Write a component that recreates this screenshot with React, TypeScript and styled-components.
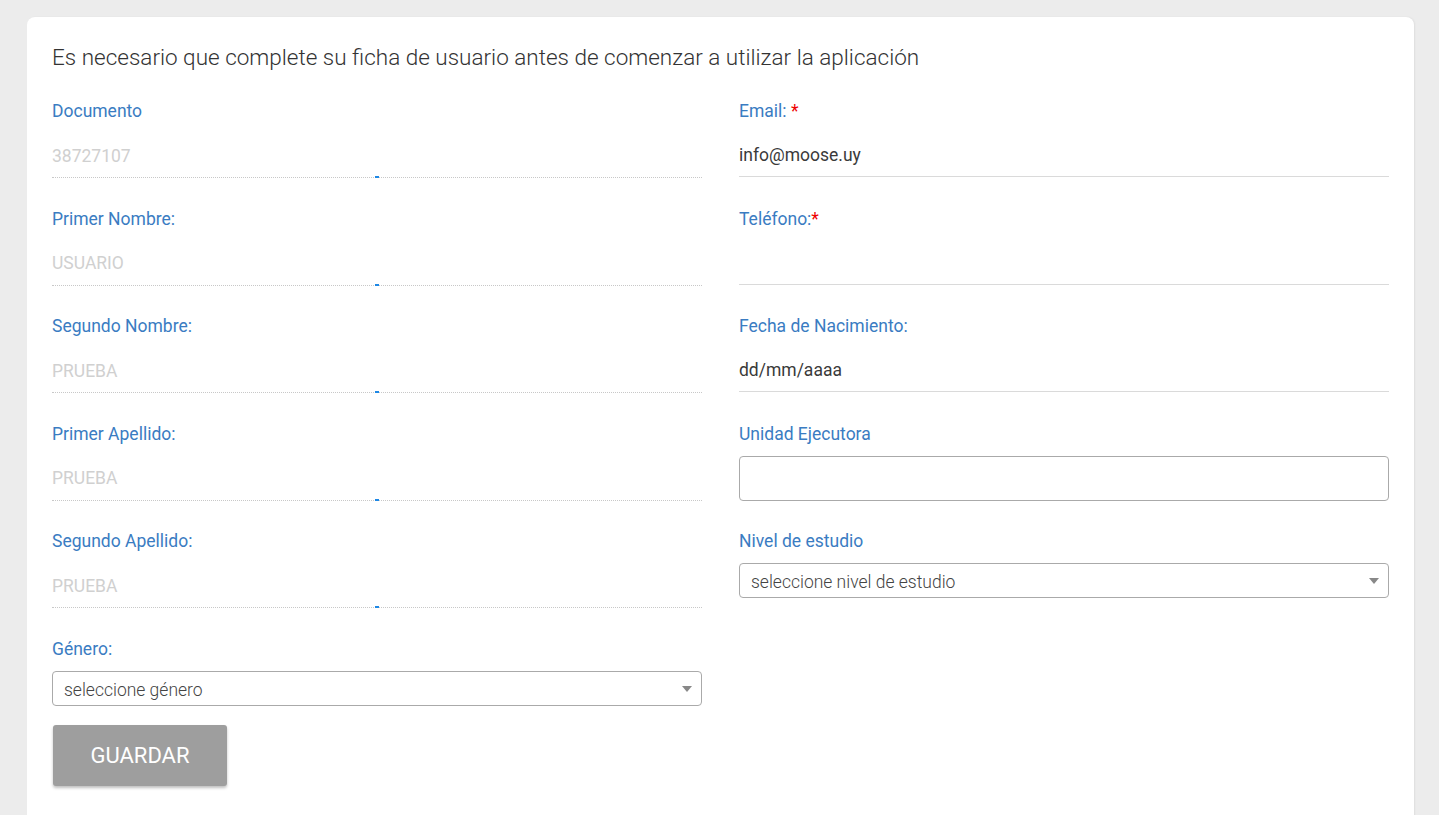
import React from 'react';
import styled, { createGlobalStyle } from 'styled-components';

const GlobalStyle = createGlobalStyle`
  html, body {
    margin: 0;
    padding: 0;
    background: #ececec;
    font-family: Roboto, "Noto Sans", sans-serif;
    overflow: hidden;
  }
  * { box-sizing: border-box; }
`;

const Page = styled.div`
  padding: 17px 25px 0 27px;
  height: 815px;
`;

const Card = styled.div`
  background: #fff;
  border-radius: 8px;
  box-shadow: 1px 0 2px rgba(0, 0, 0, 0.06);
  padding: 28px 25px 40px 25px;
  min-height: 830px;
`;

const Title = styled.h1`
  margin: 0 0 31px 0;
  font-size: 22.5px;
  font-weight: 300;
  color: #333;
  line-height: 24px;
`;

const Columns = styled.div`
  display: grid;
  grid-template-columns: 650px 650px;
  column-gap: 37px;
`;

const Column = styled.div`
  display: flex;
  flex-direction: column;
`;

const Field = styled.div<{ $last?: boolean }>`
  display: flex;
  flex-direction: column;
  height: ${(p) => (p.$last ? 'auto' : '107.5px')};
`;

const Label = styled.label`
  font-size: 17.5px;
  line-height: 22px;
  color: #3a7cc2;
  margin-bottom: 11px;
`;

const Required = styled.span`
  color: #e00;
`;

const LineInput = styled.div<{ $disabled?: boolean }>`
  position: relative;
  height: ${(p) => (p.$disabled ? '45px' : '44px')};
  display: flex;
  align-items: center;
  padding-top: 1px;
  font-size: 17.5px;
  color: ${(p) => (p.$disabled ? '#d0d0d0' : '#3a3a3a')};
  border-bottom: ${(p) => (p.$disabled ? '1px dotted #c8c8c8' : '1px solid #dadada')};
`;

const FocusMark = styled.span`
  position: absolute;
  left: 323px;
  bottom: -1px;
  width: 4px;
  height: 2px;
  background: #1e88e5;
`;

const BoxInput = styled.div`
  height: 45px;
  border: 1px solid #aaa;
  border-radius: 4px;
  margin-top: 0;
`;

const Select = styled.div`
  position: relative;
  height: 35px;
  border: 1px solid #aaa;
  border-radius: 4px;
  padding: 3px 11px 0 11px;
  display: flex;
  align-items: center;
  font-size: 17.5px;
  font-weight: 300;
  color: #444;
  &::after {
    content: '';
    position: absolute;
    right: 9px;
    top: 14px;
    border-left: 5px solid transparent;
    border-right: 5px solid transparent;
    border-top: 6px solid #888;
  }
`;

const SaveButton = styled.button`
  margin-top: 19px;
  margin-left: 1px;
  width: 174px;
  height: 61px;
  border: none;
  border-radius: 3px;
  background: #9e9e9e;
  color: #fff;
  font-family: Roboto, sans-serif;
  font-size: 22px;
  box-shadow: 0 2px 3px rgba(0, 0, 0, 0.25);
  cursor: pointer;
`;

const leftFields = [
  { label: 'Documento', value: '38727107' },
  { label: 'Primer Nombre:', value: 'USUARIO' },
  { label: 'Segundo Nombre:', value: 'PRUEBA' },
  { label: 'Primer Apellido:', value: 'PRUEBA' },
  { label: 'Segundo Apellido:', value: 'PRUEBA' },
];

export default function App() {
  return (
    <>
      <GlobalStyle />
      <Page>
        <Card>
          <Title>Es necesario que complete su ficha de usuario antes de comenzar a utilizar la aplicación</Title>
          <Columns>
            <Column>
              {leftFields.map((f) => (
                <Field key={f.label}>
                  <Label>{f.label}</Label>
                  <LineInput $disabled>
                    {f.value}
                    <FocusMark />
                  </LineInput>
                </Field>
              ))}
              <Field $last>
                <Label>Género:</Label>
                <Select>seleccione género</Select>
              </Field>
              <div>
                <SaveButton>GUARDAR</SaveButton>
              </div>
            </Column>
            <Column>
              <Field>
                <Label>
                  Email: <Required>*</Required>
                </Label>
                <LineInput>info@moose.uy</LineInput>
              </Field>
              <Field>
                <Label>
                  Teléfono:<Required>*</Required>
                </Label>
                <LineInput />
              </Field>
              <Field>
                <Label>Fecha de Nacimiento:</Label>
                <LineInput>dd/mm/aaaa</LineInput>
              </Field>
              <Field>
                <Label>Unidad Ejecutora</Label>
                <BoxInput />
              </Field>
              <Field $last>
                <Label>Nivel de estudio</Label>
                <Select>seleccione nivel de estudio</Select>
              </Field>
            </Column>
          </Columns>
        </Card>
      </Page>
    </>
  );
}
